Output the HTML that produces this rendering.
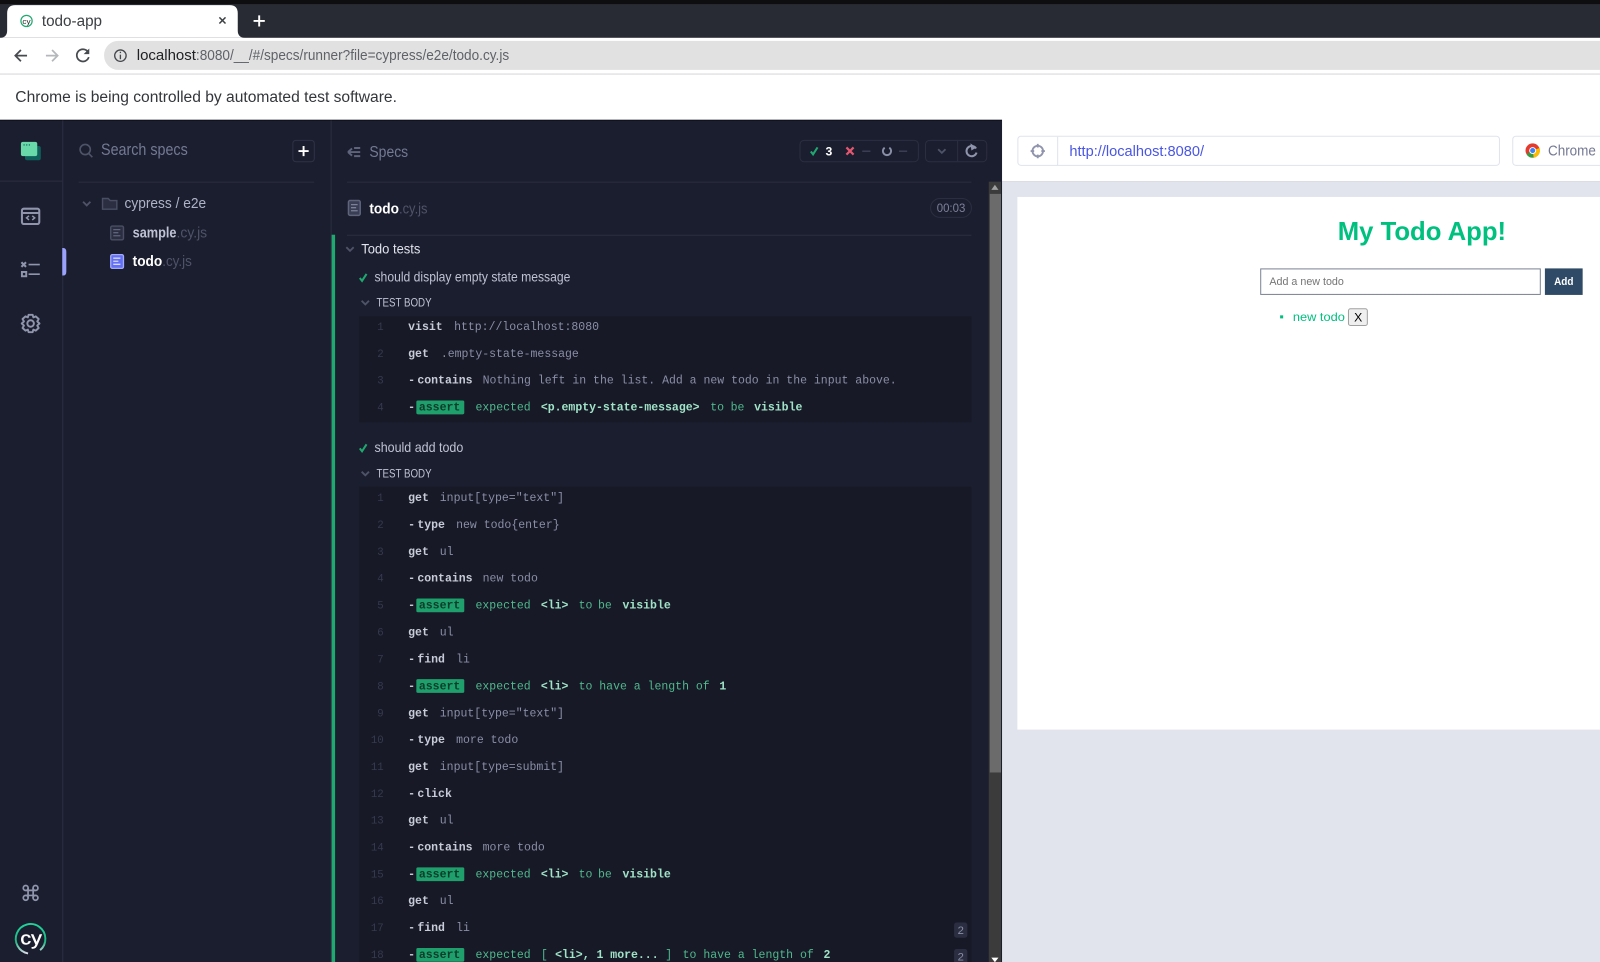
<!DOCTYPE html>
<html><head><meta charset="utf-8"><title>todo-app</title>
<style>
html,body{margin:0;padding:0;width:1600px;height:962px;overflow:hidden;background:#1b1e2e}
svg{display:block;position:absolute;left:0;top:0}
text{font-family:"Liberation Sans",sans-serif;white-space:pre}
.m{font-family:"Liberation Mono",monospace;font-size:11.28px}
.n{fill:#363a4e;text-anchor:end;font-size:10.5px}
.c{fill:#c8cbd9;font-weight:700}
.a{fill:#8a8ea6}
.e{fill:#4fb98d}
.b{fill:#a0e3c7;font-weight:700}
.d{fill:#c8cbd9;font-weight:700}
.t{fill:#0b3d2a;font-weight:700}
</style></head><body>
<svg width="1600" height="962" viewBox="0 0 1568 942.7" xmlns="http://www.w3.org/2000/svg">
<defs>
<g id="chk"><path d="M-3.4 0.4 L-1.2 3.2 L3.2 -3.6" fill="none" stroke="#1fa971" stroke-width="2"/></g>
<g id="chev"><path d="M-3.6 -1.8 L0 1.8 L3.6 -1.8" fill="none" stroke="#4f5368" stroke-width="1.8"/></g>
<g id="badge"><rect x="408" y="-7" width="47" height="13.5" rx="1.5" fill="#1f9f6c"/><text class="m t" x="410.5" y="3">assert</text><text class="m d" x="400" y="3">-</text></g>
<linearGradient id="ring" x1="0.5" y1="0" x2="0.5" y2="1"><stop offset="0" stop-color="#1fd49a"/><stop offset=".6" stop-color="#1fb884"/><stop offset="1" stop-color="#d8dbe6"/></linearGradient>
</defs>

<!-- browser chrome -->
<rect width="1568" height="5" fill="#0e0e10"/>
<rect y="4" width="1568" height="33" fill="#292b34"/>
<path d="M0 37 C5 37 7 34 7 30 V13 Q7 5 15 5 H225 Q233 5 233 13 V30 C233 34 235 37 240 37 Z" fill="#fff"/>
<circle cx="26" cy="20.5" r="5.5" fill="none" stroke="#1fa971" stroke-width="1.2"/>
<text x="22" y="23.5" font-size="7.5" fill="#222" textLength="8" lengthAdjust="spacingAndGlyphs">cy</text>
<text x="41" y="25.5" font-size="15" fill="#3c4043" textLength="59" lengthAdjust="spacingAndGlyphs">todo-app</text>
<path d="M215 17 L221 23 M221 17 L215 23" stroke="#3c4043" stroke-width="1.5"/>
<path d="M254 15 V26 M248.5 20.5 H259.5" stroke="#fff" stroke-width="1.9"/>
<rect y="37" width="1568" height="36" fill="#fff"/>
<rect x="102" y="40" width="1480" height="28.5" rx="14" fill="#e1e1e1"/>
<path d="M26.5 54.5 H15.5 M20.5 49 L15 54.5 L20.5 60" fill="none" stroke="#474a4e" stroke-width="1.7"/>
<path d="M45 54.5 H56 M51 49 L56.5 54.5 L51 60" fill="none" stroke="#b5b7ba" stroke-width="1.7"/>
<path d="M86 50.5 A6 6 0 1 0 87 56" fill="none" stroke="#474a4e" stroke-width="1.7"/><path d="M87.5 47.5 V53 H82 Z" fill="#474a4e"/>
<circle cx="118" cy="54.5" r="5.6" fill="none" stroke="#45484c" stroke-width="1.3"/><path d="M118 53.5 V58 M118 50.7 V52" stroke="#45484c" stroke-width="1.3"/>
<text x="134" y="59" font-size="14.5" fill="#202124" textLength="58" lengthAdjust="spacingAndGlyphs">localhost</text>
<text x="192" y="59" font-size="14.5" fill="#5f6368" textLength="307" lengthAdjust="spacingAndGlyphs">:8080/__/#/specs/runner?file=cypress/e2e/todo.cy.js</text>
<rect y="72" width="1568" height="1" fill="#d8dadd"/>
<rect y="73" width="1568" height="45" fill="#fff"/>
<text x="15" y="100" font-size="15.5" fill="#33363a" textLength="374" lengthAdjust="spacingAndGlyphs">Chrome is being controlled by automated test software.</text>

<!-- app background -->
<rect y="117.5" width="982" height="826" fill="#1b1e2e"/>
<rect y="117.3" width="982" height="1" fill="#0e0f16"/>
<rect x="61" y="118" width="1" height="825" fill="#2b2e40"/>
<rect x="324" y="118" width="1" height="825" fill="#2b2e40"/>
<rect y="177" width="61" height="1" fill="#2b2e40"/>

<!-- sidebar icons -->
<rect x="24.5" y="143" width="15.5" height="14" rx="2" fill="#0f5f5a"/>
<rect x="20.5" y="139" width="16" height="14" rx="2" fill="#69d9a9"/>
<path d="M23 142 H24.2 M25.6 142 H26.8 M28.2 142 H29.4" stroke="#0f5f5a" stroke-width="1.1"/>
<g fill="none" stroke="#9095ad" stroke-width="2">
<rect x="21.5" y="204.5" width="17" height="15" rx="1.8"/><path d="M21.5 208.7 H38.5"/>
<path d="M28.4 211.5 L26 213.5 L28.4 215.5 M31.6 211.5 L34 213.5 L31.6 215.5" stroke-width="1.5"/>
<path d="M21 257 L25.5 261.5 M25.5 257 L21 261.5" stroke-width="2"/><path d="M28 259.2 H39 M28 268.7 H39" stroke-width="1.6"/>
<rect x="21.5" y="266.5" width="4.2" height="4.2" stroke-width="1.9"/>
<circle cx="30" cy="317" r="3.2" stroke-width="1.9"/>
<path d="M28 308.5 H32 L32.7 311 L35 310 L37.9 312.6 L36.5 315 L38.7 317 L36.5 319 L37.9 321.4 L35 324 L32.7 323 L32 325.5 H28 L27.3 323 L25 324 L22.1 321.4 L23.5 319 L21.3 317 L23.5 315 L22.1 312.6 L25 310 L27.3 311 Z" stroke-width="1.9" stroke-linejoin="round"/>
<path d="M27.5 870 V880 M32.5 870 V880 M25 872.5 H35 M25 877.5 H35" stroke-width="1.7"/>
<circle cx="25.2" cy="870.2" r="2.4" stroke-width="1.7"/><circle cx="34.8" cy="870.2" r="2.4" stroke-width="1.7"/><circle cx="25.2" cy="879.8" r="2.4" stroke-width="1.7"/><circle cx="34.8" cy="879.8" r="2.4" stroke-width="1.7"/>
</g>
<path d="M61 243 H62 Q65 243 65 247 V266 Q65 270 62 270 H61 Z" fill="#9aa2fc"/>
<path d="M39.3 931.1 A14.5 14.5 0 1 0 27.5 934.3" fill="none" stroke="url(#ring)" stroke-width="1.9"/>
<text x="20" y="925.5" font-size="18" fill="#fff" stroke="#fff" stroke-width=".4" textLength="21" lengthAdjust="spacingAndGlyphs">cy</text>

<!-- specs panel -->
<circle cx="83.5" cy="146.5" r="5" fill="none" stroke="#4f5368" stroke-width="1.6"/><path d="M87 150.5 L90.5 154" stroke="#4f5368" stroke-width="1.6"/>
<text x="99" y="152" font-size="16.5" fill="#747994" textLength="85" lengthAdjust="spacingAndGlyphs">Search specs</text>
<rect x="287" y="137.5" width="21" height="21" rx="3" fill="none" stroke="#2e3247"/>
<path d="M297.5 143 V153 M292.5 148 H302.5" stroke="#fff" stroke-width="1.9"/>
<rect x="77" y="178" width="231" height="1" fill="#2b2e40"/>
<use href="#chev" x="85" y="199.5"/>
<path d="M100.5 194.5 H106 L108 196.5 H114.5 V205 H100.5 Z" fill="#2b2e40" stroke="#4a4e63" stroke-width="1.4"/>
<text x="122" y="204" font-size="14.5" fill="#afb3c7" textLength="80" lengthAdjust="spacingAndGlyphs">cypress / e2e</text>
<rect x="108.5" y="221.5" width="12.5" height="13.5" rx="1.5" fill="#2b2e40" stroke="#4a4e63" stroke-width="1.4"/>
<path d="M111 225 H118 M111 228 H116 M111 231 H118" stroke="#5f637b" stroke-width="1.3"/>
<text x="130" y="232.5" font-size="14.5" font-weight="700" fill="#bfc2d4" textLength="43" lengthAdjust="spacingAndGlyphs">sample</text>
<text x="173" y="232.5" font-size="14.5" fill="#4f5368" textLength="30" lengthAdjust="spacingAndGlyphs">.cy.js</text>
<rect x="108.5" y="249.5" width="12.5" height="13.5" rx="1.5" fill="#6470f3" stroke="#a3aaf8" stroke-width="1.3"/>
<path d="M111 253 H118 M111 256 H116 M111 259 H118" stroke="#d5d8fc" stroke-width="1.3"/>
<text x="130" y="260.5" font-size="14.5" font-weight="700" fill="#fff" textLength="29" lengthAdjust="spacingAndGlyphs">todo</text>
<text x="159" y="260.5" font-size="14.5" fill="#4f5368" textLength="29" lengthAdjust="spacingAndGlyphs">.cy.js</text>

<!-- reporter header -->
<path d="M341 149 L345 145.5 M341 149 L345 152.5 M341 149 H353 M347 145 H353 M347 153 H353" stroke="#5f637b" stroke-width="1.9" fill="none"/>
<text x="362" y="154" font-size="15.5" fill="#747994" textLength="38" lengthAdjust="spacingAndGlyphs">Specs</text>
<rect x="784" y="137.5" width="116" height="21" rx="4" fill="none" stroke="#2b2e40"/>
<use href="#chk" x="798" y="148"/>
<text x="809" y="152.5" font-size="12" font-weight="700" fill="#fff">3</text>
<path d="M829.5 144.5 L836.5 151.5 M836.5 144.5 L829.5 151.5" stroke="#e45770" stroke-width="2.2"/>
<rect x="845" y="147.5" width="8" height="1.3" fill="#3f4358"/>
<path d="M867 144.7 A4 4 0 1 0 871.5 144.7" fill="none" stroke="#8a8ea6" stroke-width="1.9"/>
<rect x="881" y="147.5" width="8" height="1.3" fill="#3f4358"/>
<rect x="907" y="137.5" width="60" height="21" rx="4" fill="none" stroke="#2b2e40"/>
<rect x="938" y="138" width="1" height="20" fill="#2b2e40"/>
<use href="#chev" x="923" y="148"/>
<path d="M956.5 145.5 A5 5 0 1 0 957 149.5" fill="none" stroke="#9095ad" stroke-width="2"/><path d="M951 140.5 L957 144.5 L952 147.5 Z" fill="#9095ad"/>
<rect x="340" y="178" width="612" height="1" fill="#2b2e40"/>

<!-- file row -->
<rect x="341.5" y="196.5" width="11.5" height="14.5" rx="1.5" fill="#3a3e54" stroke="#5f637b" stroke-width="1.5"/>
<path d="M344 200.5 H350.5 M344 203.5 H349 M344 206.5 H350.5" stroke="#7d8199" stroke-width="1.3"/>
<text x="362" y="209" font-size="14.5" font-weight="700" fill="#fff" textLength="29" lengthAdjust="spacingAndGlyphs">todo</text>
<text x="391" y="209" font-size="14.5" fill="#4f5368" textLength="28" lengthAdjust="spacingAndGlyphs">.cy.js</text>
<rect x="912" y="194.5" width="40" height="18.5" rx="9.2" fill="none" stroke="#2b2e40"/>
<text x="918" y="207.5" font-size="12" fill="#7d8199" textLength="28" lengthAdjust="spacingAndGlyphs">00:03</text>
<rect x="340" y="230" width="612" height="1" fill="#2b2e40"/>
<rect x="325" y="230" width="3.4" height="713" fill="#1fa971"/>

<!-- tests -->
<use href="#chev" x="343" y="244"/>
<text x="354" y="248.5" font-size="13.5" fill="#e1e3ed" textLength="58" lengthAdjust="spacingAndGlyphs">Todo tests</text>
<use href="#chk" x="356" y="272"/>
<text x="367" y="276" font-size="13.5" fill="#bfc2d4" textLength="192" lengthAdjust="spacingAndGlyphs">should display empty state message</text>
<use href="#chev" x="358" y="296.5"/>
<text x="369" y="300.5" font-size="11.5" fill="#bfc2d4" textLength="54" lengthAdjust="spacingAndGlyphs">TEST BODY</text>
<rect x="352" y="310" width="600" height="104" fill="#171926"/>
<use href="#chk" x="356" y="439"/>
<text x="367" y="443" font-size="13.5" fill="#bfc2d4" textLength="87" lengthAdjust="spacingAndGlyphs">should add todo</text>
<use href="#chev" x="358" y="464"/>
<text x="369" y="468" font-size="11.5" fill="#bfc2d4" textLength="54" lengthAdjust="spacingAndGlyphs">TEST BODY</text>
<rect x="352" y="477" width="600" height="466" fill="#171926"/>

<!-- group 1 -->
<text class="m n" x="376" y="323.5">1</text><text class="m c" x="400" y="323.5">visit</text><text class="m a" x="445" y="323.5">http://localhost:8080</text>
<text class="m n" x="376" y="350">2</text><text class="m c" x="400" y="350">get</text><text class="m a" x="432" y="350">.empty-state-message</text>
<text class="m n" x="376" y="376">3</text><text class="m d" x="400" y="376">-</text><text class="m c" x="409" y="376">contains</text><text class="m a" x="473" y="376">Nothing left in the list. Add a new todo in the input above.</text>
<text class="m n" x="376" y="402.5">4</text><use href="#badge" y="399.5"/><text class="m e" x="466" y="402.5">expected</text><text class="m b" x="530" y="402.5">&lt;p.empty-state-message&gt;</text><text class="m e" x="696" y="402.5">to</text><text class="m e" x="716" y="402.5">be</text><text class="m b" x="739" y="402.5">visible</text>

<!-- group 2 -->
<text class="m n" x="376" y="491">1</text><text class="m c" x="400" y="491">get</text><text class="m a" x="431" y="491">input[type="text"]</text>
<text class="m n" x="376" y="517.5">2</text><text class="m d" x="400" y="517.5">-</text><text class="m c" x="409" y="517.5">type</text><text class="m a" x="447" y="517.5">new todo{enter}</text>
<text class="m n" x="376" y="544">3</text><text class="m c" x="400" y="544">get</text><text class="m a" x="431" y="544">ul</text>
<text class="m n" x="376" y="570">4</text><text class="m d" x="400" y="570">-</text><text class="m c" x="409" y="570">contains</text><text class="m a" x="473" y="570">new todo</text>
<text class="m n" x="376" y="596.5">5</text><use href="#badge" y="593.5"/><text class="m e" x="466" y="596.5">expected</text><text class="m b" x="530" y="596.5">&lt;li&gt;</text><text class="m e" x="567" y="596.5">to</text><text class="m e" x="586" y="596.5">be</text><text class="m b" x="610" y="596.5">visible</text>
<text class="m n" x="376" y="623">6</text><text class="m c" x="400" y="623">get</text><text class="m a" x="431" y="623">ul</text>
<text class="m n" x="376" y="649">7</text><text class="m d" x="400" y="649">-</text><text class="m c" x="409" y="649">find</text><text class="m a" x="447" y="649">li</text>
<text class="m n" x="376" y="675.5">8</text><use href="#badge" y="672.5"/><text class="m e" x="466" y="675.5">expected</text><text class="m b" x="530" y="675.5">&lt;li&gt;</text><text class="m e" x="567" y="675.5">to have a length of</text><text class="m b" x="705" y="675.5">1</text>
<text class="m n" x="376" y="702">9</text><text class="m c" x="400" y="702">get</text><text class="m a" x="431" y="702">input[type="text"]</text>
<text class="m n" x="376" y="728">10</text><text class="m d" x="400" y="728">-</text><text class="m c" x="409" y="728">type</text><text class="m a" x="447" y="728">more todo</text>
<text class="m n" x="376" y="754.5">11</text><text class="m c" x="400" y="754.5">get</text><text class="m a" x="431" y="754.5">input[type=submit]</text>
<text class="m n" x="376" y="781">12</text><text class="m d" x="400" y="781">-</text><text class="m c" x="409" y="781">click</text>
<text class="m n" x="376" y="807">13</text><text class="m c" x="400" y="807">get</text><text class="m a" x="431" y="807">ul</text>
<text class="m n" x="376" y="833.5">14</text><text class="m d" x="400" y="833.5">-</text><text class="m c" x="409" y="833.5">contains</text><text class="m a" x="473" y="833.5">more todo</text>
<text class="m n" x="376" y="860">15</text><use href="#badge" y="857"/><text class="m e" x="466" y="860">expected</text><text class="m b" x="530" y="860">&lt;li&gt;</text><text class="m e" x="567" y="860">to</text><text class="m e" x="586" y="860">be</text><text class="m b" x="610" y="860">visible</text>
<text class="m n" x="376" y="886">16</text><text class="m c" x="400" y="886">get</text><text class="m a" x="431" y="886">ul</text>
<text class="m n" x="376" y="912.5">17</text><text class="m d" x="400" y="912.5">-</text><text class="m c" x="409" y="912.5">find</text><text class="m a" x="447" y="912.5">li</text>
<text class="m n" x="376" y="939">18</text><use href="#badge" y="936"/><text class="m e" x="466" y="939">expected</text><text class="m e" x="530" y="939">[ </text><text class="m b" x="544" y="939">&lt;li&gt;, 1 more...</text><text class="m e" x="652" y="939">]</text><text class="m e" x="669" y="939">to have a length of</text><text class="m b" x="807" y="939">2</text>
<rect x="935" y="904" width="13" height="15" rx="2.5" fill="#2b2e40"/><text x="938.5" y="915.5" font-size="11" fill="#8a8ea6">2</text>
<rect x="935" y="930" width="13" height="15" rx="2.5" fill="#2b2e40"/><text x="938.5" y="941.5" font-size="11" fill="#8a8ea6">2</text>

<!-- scrollbar -->
<rect x="969" y="178" width="12" height="765" fill="#3b3b3b"/>
<rect x="970" y="190" width="11" height="567" fill="#6b6b6b"/>
<path d="M975 181 L978.5 186 H971.5 Z" fill="#a0a0a0"/>
<path d="M975 943 L971.5 938.5 H978.5 Z" fill="#fff"/>

<!-- right panel -->
<rect x="982" y="117.5" width="586" height="60.5" fill="#fff"/>
<rect x="982" y="178" width="586" height="765" fill="#e1e3ed"/>
<rect x="997.5" y="133.5" width="472" height="28.5" rx="3" fill="#fff" stroke="#e1e3ed"/>
<rect x="1036" y="134" width="1" height="28" fill="#e1e3ed"/>
<circle cx="1017" cy="148" r="5.2" fill="none" stroke="#9095ad" stroke-width="1.8"/>
<path d="M1017 141 V144.5 M1017 151.5 V155 M1010 148 H1013.5 M1020.5 148 H1024" stroke="#9095ad" stroke-width="1.8"/>
<text x="1048" y="153" font-size="14.5" fill="#4956e3" textLength="132" lengthAdjust="spacingAndGlyphs">http://localhost:8080/</text>
<rect x="1482.5" y="133.5" width="100" height="28.5" rx="3" fill="#fff" stroke="#e1e3ed"/>
<circle cx="1502" cy="147.5" r="7" fill="#e33b2e"/>
<path d="M1502 147.5 L1496 151 A7 7 0 0 0 1503 154.4 Z" fill="#2f9e44"/>
<path d="M1502 147.5 L1503 154.4 A7 7 0 0 0 1508.8 145 Z" fill="#fbbc04"/>
<circle cx="1502" cy="147.5" r="3.4" fill="#fff"/><circle cx="1502" cy="147.5" r="2.5" fill="#3b82f6"/>
<text x="1517" y="152.5" font-size="14.5" fill="#747994" textLength="47" lengthAdjust="spacingAndGlyphs">Chrome</text>

<!-- AUT -->
<rect x="997" y="193" width="571" height="522" fill="#fff"/>
<text x="1311" y="235.3" font-size="25" font-weight="700" fill="#00c07f" textLength="165" lengthAdjust="spacingAndGlyphs">My Todo App!</text>
<rect x="1235.5" y="263.5" width="274" height="25" fill="#fff" stroke="#7b8494"/>
<text x="1244" y="279.5" font-size="10.5" fill="#757575" textLength="73" lengthAdjust="spacingAndGlyphs">Add a new todo</text>
<rect x="1514" y="263" width="37" height="26" fill="#2f4a66"/>
<text x="1523" y="279.5" font-size="11" font-weight="700" fill="#fff" textLength="19" lengthAdjust="spacingAndGlyphs">Add</text>
<rect x="1254.5" y="309" width="3" height="3" fill="#00c07f"/>
<text x="1267" y="314.5" font-size="12" fill="#00c07f" textLength="51" lengthAdjust="spacingAndGlyphs">new todo</text>
<rect x="1321.5" y="302.5" width="18.5" height="16.5" rx="2" fill="#efefef" stroke="#a0a0a0"/>
<text x="1327" y="315" font-size="12" fill="#000">X</text>
</svg>
</body></html>
